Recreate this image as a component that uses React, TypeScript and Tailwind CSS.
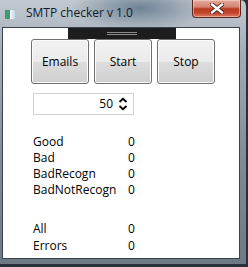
import React from "react";

const font = { fontFamily: '"Segoe UI", "Open Sans", "Noto Sans", sans-serif' };

function Btn({ label }: { label: string }) {
  return (
    <div className="w-[58px] h-[45px] rounded-[3px] border border-[#707070] bg-[linear-gradient(#f2f2f2_0%,#ebebeb_50%,#dddddd_51%,#cfcfcf_100%)] flex items-center justify-center text-[12px] text-black shadow-[inset_0_0_0_1px_#fcfcfc]">
      {label}
    </div>
  );
}

export default function App() {
  const top = [
    ["Good", "0"],
    ["Bad", "0"],
    ["BadRecogn", "0"],
    ["BadNotRecogn", "0"],
  ];
  const bottom = [
    ["All", "0"],
    ["Errors", "0"],
  ];
  return (
    <div className="w-[248px] h-[267px] overflow-hidden bg-[#27323c]" style={font}>
      <div className="w-[247px] h-[265px] flex flex-col rounded-tr-[6px] border-r border-b border-[#26303a] bg-[radial-gradient(ellipse_70px_22px_at_140px_8px,#6f8294_0%,transparent_100%),linear-gradient(#c2c9d0_0%,#a2adb7_20%,#7f8c98_60%,#6d7a86_100%)]">
        {/* title bar */}
        <div className="h-[27px] flex items-start">
          <div className="mt-[9px] ml-[4px] w-[12px] h-[11px] bg-[#f4f6f6] border border-[#b9c0c4] flex">
            <div className="w-[5px] h-full bg-[#3f9a74]" />
            <div className="w-[2px]" />
            <div className="w-[3px] h-full bg-[#cfe1ee]" />
          </div>
          <div className="ml-[10px] mt-[5px] text-[12px] leading-[16px] text-[#111a2b]">SMTP checker v 1.0</div>
          <div className="ml-auto mr-[5px] w-[49px] h-[18px] rounded-b-[4px] border border-t-0 border-[#5b2620] bg-[linear-gradient(#e3aa9c_0%,#d68573_40%,#b83a22_52%,#c3442c_75%,#dc7a5f_100%)] flex items-center justify-center shadow-[inset_0_0_0_1px_rgba(255,220,210,0.5)]">
            <svg width="14" height="11" viewBox="0 0 14 11">
              <path d="M2 1.5 L12 9.5 M12 1.5 L2 9.5" stroke="#4a1c16" strokeWidth="4.2" strokeLinecap="square" />
              <path d="M2 1.5 L12 9.5 M12 1.5 L2 9.5" stroke="#ffffff" strokeWidth="2.4" strokeLinecap="square" />
            </svg>
          </div>
        </div>
        {/* client */}
        <div className="ml-[2px] w-[238px] h-[232px] border border-[#37434f] bg-white flex flex-col">
          <div className="ml-[65px] w-[108px] h-[11px] bg-[#1d1d1d] flex flex-col items-center justify-center gap-[1px]">
            <div className="w-[30px] h-[1px] bg-[#8a8a8a]" />
            <div className="w-[30px] h-[1px] bg-[#8a8a8a]" />
          </div>
          <div className="ml-[28px] flex gap-[5px]">
            <Btn label="Emails" />
            <Btn label="Start" />
            <Btn label="Stop" />
          </div>
          <div className="mt-[9px] ml-[30px] w-[101px] h-[22px] border border-[#cfd1d6] flex items-center">
            <div className="flex-1 text-right text-[12px] text-black leading-[16px] pr-[5px]">50</div>
            <svg width="10" height="14" viewBox="0 0 10 14" className="mr-[5px]">
              <path d="M1.5 5 L5 1.8 L8.5 5" fill="none" stroke="#000" strokeWidth="1.8" />
              <path d="M1.5 9 L5 12.2 L8.5 9" fill="none" stroke="#000" strokeWidth="1.8" />
            </svg>
          </div>
          <div className="mt-[19px] ml-[30px] flex flex-col text-[12px] leading-[16px] text-black">
            {top.map(([l, v]) => (
              <div key={l} className="flex">
                <span className="w-[95px]">{l}</span>
                <span>{v}</span>
              </div>
            ))}
            <div className="h-[23px]" />
            {bottom.map(([l, v]) => (
              <div key={l} className="flex h-[17px]">
                <span className="w-[95px]">{l}</span>
                <span>{v}</span>
              </div>
            ))}
          </div>
        </div>
      </div>
    </div>
  );
}
